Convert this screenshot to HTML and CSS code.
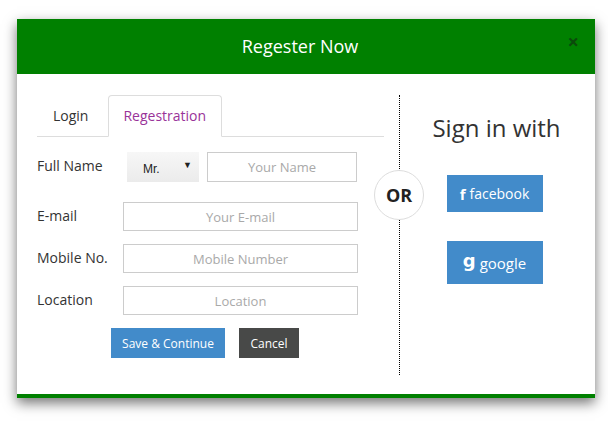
FILE: index.html
```html
<!DOCTYPE html>
<html>
<head>
<meta charset="utf-8">
<link rel="stylesheet" href="styles.css">
</head>
<body>
<div class="modal">
  <div class="modal-header">
    <h1 class="title">Regester Now</h1>
    <span class="close">&times;</span>
  </div>
  <div class="modal-body">
    <div class="left">
      <ul class="tabs">
        <li class="tab">Login</li>
        <li class="tab active">Regestration</li>
      </ul>
      <form class="form">
        <div class="row row-first">
          <label class="label">Full Name</label>
          <div class="select"><span>Mr.</span><span class="arrow">&#9660;</span></div>
          <input class="input input-name" placeholder="Your Name">
        </div>
        <div class="row">
          <label class="label">E-mail</label>
          <input class="input" placeholder="Your E-mail">
        </div>
        <div class="row">
          <label class="label">Mobile No.</label>
          <input class="input" placeholder="Mobile Number">
        </div>
        <div class="row">
          <label class="label">Location</label>
          <input class="input" placeholder="Location">
        </div>
        <div class="actions">
          <button type="button" class="btn btn-primary">Save &amp; Continue</button>
          <button type="button" class="btn btn-dark">Cancel</button>
        </div>
      </form>
    </div>
    <div class="right">
      <div class="or">OR</div>
      <h2 class="sign">Sign in with</h2>
      <a class="social social-fb"><b class="ico">f</b>facebook</a>
      <a class="social social-g"><b class="ico ico-g">g</b>google</a>
    </div>
  </div>
</div>
</body>
</html>
```
FILE: styles.css
```css
* { box-sizing: border-box; }
html, body { margin: 0; padding: 0; background: #fff; }
body {
  font-family: "Open Sans", "Liberation Sans", sans-serif;
  color: #333;
  min-height: 424px;
  padding-top: 19px;
}

.modal {
  margin: 0 0 0 17px;
  width: 578px;
  background: #fff;
  border-bottom: 4px solid #008000;
  box-shadow: 0 5px 12px rgba(0,0,0,0.55);
}
.modal-header {
  position: relative;
  height: 55px;
  background: #008000;
  display: flex;
  align-items: center;
  justify-content: center;
  padding-right: 12px;
  padding-bottom: 1px;
}
.title {
  margin: 0;
  font-size: 18px;
  font-weight: 400;
  color: #fff;
}
.close {
  position: absolute;
  right: 16px;
  top: 11px;
  font-size: 20px;
  font-weight: 700;
  color: #0b4a0b;
  line-height: 24px;
}
.modal-body {
  display: flex;
  height: 320px;
}
.left {
  width: 347px;
  margin-left: 20px;
  padding-top: 21px;
}
.tabs {
  list-style: none;
  margin: 0;
  padding: 0;
  display: flex;
  height: 42px;
  border-bottom: 1px solid #ddd;
}
.tab {
  padding: 0 15px;
  height: 42px;
  line-height: 40px;
  font-size: 14px;
  color: #333;
  margin-right: 4px;
  border: 1px solid transparent;
  border-radius: 4px 4px 0 0;
}
.tab:first-child { padding-left: 15px; }
.tab.active {
  color: #993399;
  border-color: #ddd;
  border-bottom-color: #fff;
  background: #fff;
  padding-left: 14px;
}
.form { margin-top: 15px; }
.row {
  display: flex;
  align-items: center;
  height: 29px;
  margin-bottom: 13px;
}
.row-first { height: 30px; margin-bottom: 20px; }
.label {
  width: 86px;
  font-size: 14px;
  color: #333;
  margin-top: -3px;
}
.select {
  width: 72px;
  height: 30px;
  margin-left: 4px;
  margin-right: 8px;
  background: linear-gradient(#f7f7f7, #ebebeb);
  font-family: "Liberation Sans", Arial, sans-serif;
  font-size: 12px;
  color: #222;
  display: flex;
  align-items: center;
  padding: 3px 7px 0 16px;
  justify-content: space-between;
}
.arrow { font-size: 9px; margin-top: -8px; }
.input {
  width: 235px;
  height: 29px;
  border: 1px solid #ccc;
  padding: 0;
  text-align: center;
  font-family: "Open Sans", sans-serif;
  font-size: 13px;
  outline: none;
}
.input::placeholder { color: #a9a9a9; }
.input-name { width: 150px; height: 30px; }
.actions {
  display: flex;
  gap: 14px;
  margin-top: 4px;
  padding-left: 74px;
}
.btn {
  height: 30px;
  border: 0;
  border-radius: 0;
  padding: 0 11px;
  font-family: "Open Sans", sans-serif;
  font-size: 12px;
  color: #fff;
}
.btn-primary { background: #428bca; width: 114px; }
.btn-dark { background: #484948; width: 60px; }

.right {
  position: relative;
  width: 196px;
  margin: 21px 0 19px 15px;
  border-left: 1px dotted #000;
  display: flex;
  flex-direction: column;
  align-items: center;
  padding-top: 14px;
  padding-right: 6px;
}
.or {
  position: absolute;
  left: -26px;
  top: 75px;
  width: 50px;
  height: 50px;
  border: 1px solid #ddd;
  border-radius: 50%;
  background: #fff;
  display: flex;
  align-items: center;
  justify-content: center;
  font-weight: 700;
  font-size: 18px;
  color: #222;
}
.sign {
  margin: 0;
  font-size: 24px;
  font-weight: 400;
  line-height: 38px;
  color: #333;
  margin-left: 4px;
}
.social {
  width: 96px;
  background: #428bca;
  color: #fff;
  display: flex;
  align-items: center;
  justify-content: center;
  font-size: 14px;
}
.social-fb { height: 37px; margin-top: 28px; }
.social-g { height: 43px; margin-top: 29px; font-size: 15px; }
.ico { font-weight: 700; margin-right: 4px; font-size: 15px; }
.ico-g { font-family: "DejaVu Sans", sans-serif; font-size: 18px; margin-top: -4px; }
```
